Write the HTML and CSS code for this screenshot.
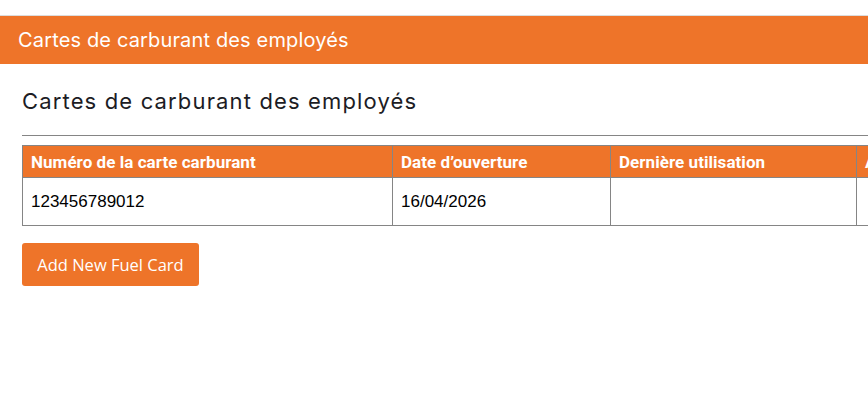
FILE: index.html
```html
<!DOCTYPE html>
<html lang="fr">
<head>
    <meta charset="UTF-8">
    <meta name="viewport" content="width=device-width, initial-scale=1.0">
    <title>Cartes de carburant des employés</title>
    <link rel="stylesheet" href="styles.css">
</head>
<body>
    <header class="topbar">
        <span class="topbar-title">Cartes de carburant des employés</span>
    </header>

    <main class="content">
        <h2 class="page-title">Cartes de carburant des employés</h2>
        <hr class="divider">

        <table class="cards-table">
            <thead>
                <tr>
                    <th class="col-number">Numéro de la carte carburant</th>
                    <th class="col-opened">Date d’ouverture</th>
                    <th class="col-last">Dernière utilisation</th>
                    <th class="col-actions">Actions</th>
                </tr>
            </thead>
            <tbody>
                <tr>
                    <td>123456789012</td>
                    <td>16/04/2026</td>
                    <td></td>
                    <td></td>
                </tr>
            </tbody>
        </table>

        <button class="btn-add" type="button">Add New Fuel Card</button>
    </main>
</body>
</html>
```

FILE: styles.css
```css
html, body {
    overflow-x: hidden;
}
body {
    margin: 0;
    padding-top: 15px;
    font-family: "Liberation Sans", Arial, sans-serif;
    color: #000;
    background: #fff;
}
.topbar {
    border-top: 1px solid #dcdcdc;
    background-color: #ee7429;
    height: 48px;
    padding-left: 18px;
    display: flex;
    align-items: center;
}
.topbar-title {
    font-family: Inter, "Noto Sans", sans-serif;
    font-size: 20px;
    color: #fff;
    letter-spacing: 0.15px;
}
.content {
    padding: 0 0 0 22px;
    width: 1100px;
}
.page-title {
    font-family: Inter, "Noto Sans", sans-serif;
    font-weight: 400;
    font-size: 22px;
    line-height: 28px;
    color: #1c1c24;
    letter-spacing: 1.15px;
    margin: 23px 0 0;
}
.divider {
    border: none;
    border-top: 1px solid #858585;
    margin: 20px 0 0;
}
.cards-table {
    margin-top: 9px;
    border-collapse: collapse;
    table-layout: fixed;
    width: 1000px;
}
.cards-table th,
.cards-table td {
    border: 1px solid #858585;
    text-align: left;
    padding: 0 8px;
}
.cards-table th {
    background-color: #ee7429;
    color: #fff;
    font-family: Roboto, "Noto Sans", sans-serif;
    font-weight: 700;
    font-size: 17px;
    letter-spacing: 0.05px;
    height: 31px;
}
.cards-table td {
    font-size: 17px;
    height: 47px;
}
.col-number { width: 353px; }
.col-opened { width: 201px; }
.col-last { width: 229px; }
.btn-add {
    margin-top: 17px;
    background-color: #ee7429;
    color: #fff;
    border: none;
    border-radius: 3px;
    font-family: "Open Sans", sans-serif;
    font-size: 16.5px;
    height: 43px;
    width: 177px;
    padding: 0;
    cursor: pointer;
}
```
